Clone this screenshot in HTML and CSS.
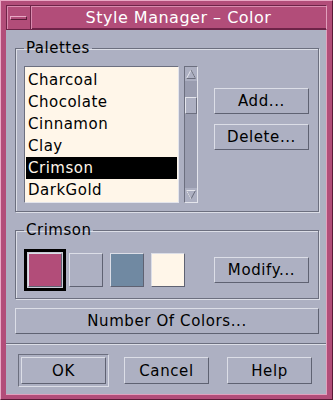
FILE: index.html
```html
<!DOCTYPE html>
<html lang="en">
<head>
  <meta charset="UTF-8">
  <title>Style Manager - Color</title>
  <link rel="stylesheet" href="styles.css">
</head>
<body>
  <div class="window">
    <div class="titlebar">
      <div class="menu-btn"><span class="menu-bar"></span></div>
      <div class="title">Style Manager – Color</div>
    </div>
    <div class="panel">
      <fieldset class="group palettes">
        <legend>Palettes</legend>
        <div class="palette-row">
          <ul class="list">
            <li>Charcoal</li>
            <li>Chocolate</li>
            <li>Cinnamon</li>
            <li>Clay</li>
            <li class="selected">Crimson</li>
            <li>DarkGold</li>
          </ul>
          <div class="scrollbar">
            <div class="arrow">
              <svg width="12" height="14" viewBox="0 0 12 14"><path d="M1.5 11.5 L6 3 L10.5 11.5 Z" fill="none" stroke="#e4e5ec" stroke-width="1"/><path d="M6 3 L10.5 11.5 L1.5 11.5" fill="none" stroke="#6a6d7c" stroke-width="1"/></svg>
            </div>
            <div class="trough">
              <div class="thumb"></div>
            </div>
            <div class="arrow">
              <svg width="12" height="14" viewBox="0 0 12 14"><path d="M1.5 2.5 L10.5 2.5 L6 11 Z" fill="none" stroke="#6a6d7c" stroke-width="1"/><path d="M6 11 L1.5 2.5 L10.5 2.5" fill="none" stroke="#e4e5ec" stroke-width="1"/></svg>
            </div>
          </div>
          <div class="side-buttons">
            <button class="btn">Add...</button>
            <button class="btn">Delete...</button>
          </div>
        </div>
      </fieldset>

      <fieldset class="group current">
        <legend>Crimson</legend>
        <div class="swatch-row">
          <div class="swatch selected crimson"></div>
          <div class="swatch gray"></div>
          <div class="swatch blue"></div>
          <div class="swatch cream"></div>
          <button class="btn modify">Modify...</button>
        </div>
      </fieldset>

      <button class="btn wide">Number Of Colors...</button>

      <div class="separator"></div>

      <div class="actions">
        <div class="default-ring"><button class="btn action">OK</button></div>
        <button class="btn action cancel">Cancel</button>
        <button class="btn action help">Help</button>
      </div>
    </div>
  </div>
</body>
</html>
```

FILE: styles.css
```css
body {
  margin: 0;
  padding: 0;
  font-family: "DejaVu Sans", sans-serif;
  font-size: 15px;
  letter-spacing: 0.5px;
  color: #000;
  background-color: #adb0c2;
}
.window {
  width: 333px;
  height: 400px;
  box-sizing: border-box;
  display: flex;
  flex-direction: column;
  padding: 4px 5px 5px 5px;
  background-color: #b24d79;
  border-top: 1px solid #e9a9c5;
  border-left: 1px solid #e9a9c5;
  border-right: 1px solid #5a1a37;
  border-bottom: 1px solid #5a1a37;
}
.titlebar {
  display: flex;
  height: 25px;
  box-sizing: border-box;
  border-top: 1px solid #6e2448;
  border-left: 1px solid #6e2448;
  border-right: 1px solid #e2a0bd;
}
.menu-btn {
  width: 23px;
  display: flex;
  align-items: center;
  justify-content: center;
  border-right: 1px solid #6e2448;
  box-shadow: inset 1px 1px 0 #d98bae;
}
.menu-bar {
  display: block;
  width: 15px;
  height: 2px;
  background-color: #b24d79;
  border-top: 1px solid #e9a9c5;
  border-left: 1px solid #e9a9c5;
  border-right: 1px solid #5a1a37;
  border-bottom: 1px solid #5a1a37;
}
.title {
  flex: 1;
  text-align: center;
  color: #fff;
  font-size: 16px;
  line-height: 23px;
  box-shadow: inset 1px 1px 0 #d98bae, inset 0 -1px 0 #6e2448;
}
.panel {
  flex: 1;
  background-color: #adb0c2;
  padding: 10px 8px 7px 9px;
  border-top: 1px solid #6e2448;
  border-right: 1px solid #e2a0bd;
  border-bottom: 1px solid #e2a0bd;
}
.group {
  margin: 0;
  width: 304px;
  box-sizing: border-box;
  border: 1px solid #6c6f7f;
  box-shadow: inset 1px 1px 0 #dcdee7, 1px 1px 0 #dcdee7;
  padding: 0 8px;
}
.group legend {
  padding: 0 2px;
  line-height: 17px;
  font-size: 15px;
}
.palettes {
  padding-top: 9px;
  padding-bottom: 8px;
}
.palette-row {
  display: flex;
  align-items: flex-start;
}
.list {
  list-style-type: none;
  margin: 0;
  padding: 2px 1px;
  width: 155px;
  height: 137px;
  box-sizing: border-box;
  background-color: #fff6e9;
  border-top: 1px solid #6c6f7f;
  border-left: 1px solid #6c6f7f;
  border-right: 1px solid #e4e5ec;
  border-bottom: 1px solid #e4e5ec;
}
.list li {
  height: 22px;
  line-height: 22px;
  padding-left: 2px;
}
.list li.selected {
  background-color: #000;
  color: #fff6e9;
}
.scrollbar {
  margin-left: 5px;
  width: 14px;
  height: 137px;
  box-sizing: border-box;
  display: flex;
  flex-direction: column;
  background-color: #9a9db0;
  border-top: 1px solid #6c6f7f;
  border-left: 1px solid #6c6f7f;
  border-right: 1px solid #e4e5ec;
  border-bottom: 1px solid #e4e5ec;
}
.arrow {
  height: 14px;
  display: flex;
  justify-content: center;
  background-color: #adb0c2;
}
.trough {
  flex: 1;
  padding-top: 16px;
}
.thumb {
  height: 15px;
  background-color: #adb0c2;
  border-top: 1px solid #e4e5ec;
  border-left: 1px solid #e4e5ec;
  border-right: 1px solid #6c6f7f;
  border-bottom: 1px solid #6c6f7f;
}
.side-buttons {
  display: flex;
  flex-direction: column;
  gap: 10px;
  margin-left: 16px;
  margin-top: 22px;
}
.btn {
  font-family: "DejaVu Sans", sans-serif;
  font-size: 15px;
  letter-spacing: 0.6px;
  color: #000;
  background-color: #adb0c2;
  border-top: 1px solid #dcdee7;
  border-left: 1px solid #dcdee7;
  border-right: 1px solid #5f6272;
  border-bottom: 1px solid #5f6272;
  border-radius: 0;
  padding: 0;
  height: 26px;
  width: 95px;
  box-sizing: border-box;
}
.current {
  margin-top: 10px;
  padding-top: 10px;
  padding-bottom: 7px;
}
.swatch-row {
  display: flex;
  align-items: center;
  gap: 7px;
  height: 42px;
  padding-left: 4px;
}
.swatch {
  width: 34px;
  height: 34px;
  box-sizing: border-box;
  border-top: 1px solid #dcdee7;
  border-left: 1px solid #dcdee7;
  border-right: 1px solid #5f6272;
  border-bottom: 1px solid #5f6272;
}
.swatch.selected {
  box-shadow: 0 0 0 1px #c9cbd6, 0 0 0 4px #000;
}
.crimson { background-color: #b24d79; }
.gray { background-color: #adb0c2; }
.blue { background-color: #7089a2; }
.cream { background-color: #fff6e9; }
.modify {
  margin-left: auto;
  margin-right: 1px;
}
.wide {
  display: block;
  width: 304px;
  margin-top: 9px;
}
.separator {
  margin: 9px -8px 0 -9px;
  height: 1px;
  background-color: #6c6f7f;
  border-bottom: 1px solid #dcdee7;
}
.actions {
  display: flex;
  align-items: center;
  margin-top: 9px;
  padding-left: 3px;
}
.default-ring {
  padding: 2px;
  border-top: 1px solid #6c6f7f;
  border-left: 1px solid #6c6f7f;
  border-right: 1px solid #dcdee7;
  border-bottom: 1px solid #dcdee7;
}
.action {
  width: 85px;
  height: 27px;
}
.cancel {
  margin-left: 15px;
}
.help {
  margin-left: 18px;
}
```
